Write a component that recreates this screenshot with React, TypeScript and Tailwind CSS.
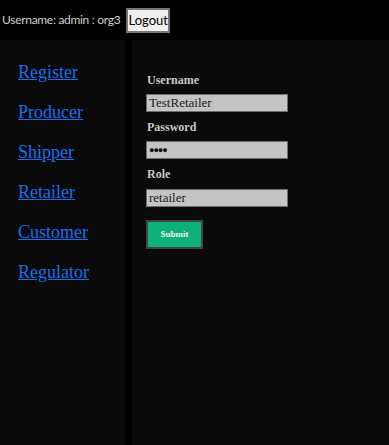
import React from "react";

export default function App() {
  const links = ["Register", "Producer", "Shipper", "Retailer", "Customer", "Regulator"];
  return (
    <div className="w-[389px] h-[445px] bg-black flex flex-col overflow-hidden">
      <div className="h-[40px] flex items-center pl-[2px] gap-[6px] shrink-0">
        <span className="text-[12px] tracking-[-0.3px] text-[#d0d0d0]" style={{ fontFamily: 'Lato, sans-serif' }}>
          Username: admin : org3
        </span>
        <button
          className="h-[25px] w-[44px] bg-[#efefef] border-2 border-[#767676] text-[13px] text-black leading-none"
          style={{ fontFamily: 'Lato, sans-serif' }}
        >
          Logout
        </button>
      </div>
      <div className="flex flex-1 gap-[7px]">
        <div className="w-[125px] bg-[#0a0a0a] pt-[12px] flex flex-col" style={{ fontFamily: '"Liberation Serif", serif' }}>
          {links.map((l) => (
            <a key={l} href="#" className="h-[40px] leading-[40px] pl-[18px] text-[18px] text-[#1a6ff0] underline">
              {l}
            </a>
          ))}
        </div>
        <div className="flex-1 bg-[#0a0a0a] pl-[14px] pt-[32px]" style={{ fontFamily: '"Liberation Serif", serif' }}>
          <div className="h-[16px] leading-[16px] text-[12px] font-bold text-[#c8c8c8] pl-[1px]">Username</div>
          <div className="mt-[6px] w-[142px] h-[18px] bg-[#c4c4c4] border border-[#6e6e6e] text-[13px] text-[#222] leading-[16px] pl-[2px]">TestRetailer</div>
          <div className="mt-[7px] h-[16px] leading-[16px] text-[12px] font-bold text-[#c8c8c8] pl-[1px]">Password</div>
          <div className="mt-[6px] w-[142px] h-[18px] bg-[#c4c4c4] border border-[#6e6e6e] text-[9px] text-[#111] leading-[16px] pl-[2px] tracking-[-1px]">●●●●</div>
          <div className="mt-[7px] h-[16px] leading-[16px] text-[12px] font-bold text-[#c8c8c8] pl-[1px]">Role</div>
          <div className="mt-[7px] w-[142px] h-[18px] bg-[#c4c4c4] border border-[#6e6e6e] text-[13px] text-[#222] leading-[16px] pl-[2px]">retailer</div>
          <button className="mt-[13px] w-[57px] h-[29px] bg-[#0db07a] border-2 border-[#444] text-[9px] font-bold text-[#f0f0f0]">
            Submit
          </button>
        </div>
      </div>
    </div>
  );
}
